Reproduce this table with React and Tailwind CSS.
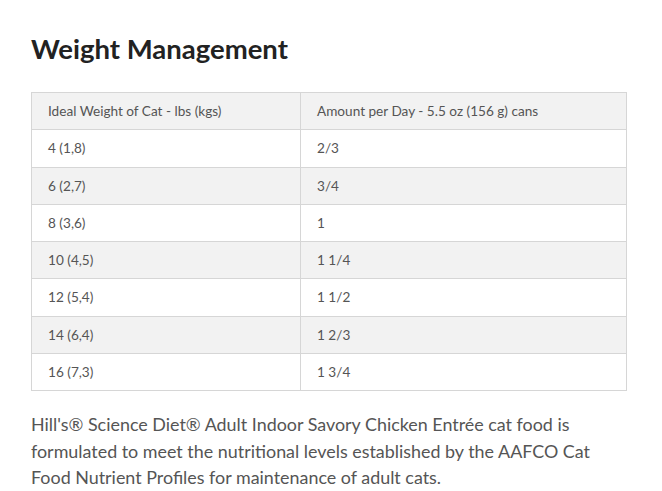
const rows = [
  ['4 (1,8)', '2/3'],
  ['6 (2,7)', '3/4'],
  ['8 (3,6)', '1'],
  ['10 (4,5)', '1 1/4'],
  ['12 (5,4)', '1 1/2'],
  ['14 (6,4)', '1 2/3'],
  ['16 (7,3)', '1 3/4'],
];

export default function App() {
  return (
    <div className="min-h-[491px] bg-white px-[31px] pt-[32px] font-['Lato',sans-serif]">
      <h2 className="text-[27.5px] font-bold leading-[33px] text-[#222]">Weight Management</h2>
      <table className="mt-[27px] w-[596px] border-collapse text-[13.6px] text-[#555]">
        <thead>
          <tr className="h-[37.3px] bg-[#f2f2f2]">
            <th className="w-[269px] border border-[#d6d6d6] pl-4 text-left font-normal">Ideal Weight of Cat - lbs (kgs)</th>
            <th className="border border-[#d6d6d6] pl-4 text-left font-normal">Amount per Day - 5.5 oz (156 g) cans</th>
          </tr>
        </thead>
        <tbody>
          {rows.map(([w, a], i) => (
            <tr key={w} className={`h-[37.3px] ${i % 2 === 1 ? 'bg-[#f2f2f2]' : 'bg-white'}`}>
              <td className="border border-[#d6d6d6] pl-4">{w}</td>
              <td className="border border-[#d6d6d6] pl-4">{a}</td>
            </tr>
          ))}
        </tbody>
      </table>
      <p className="mt-[20px] w-[592px] text-[17.9px] leading-[26.5px] text-[#555]">
        Hill's® Science Diet® Adult Indoor Savory Chicken Entrée cat food is formulated to meet the nutritional levels established by the AAFCO Cat Food Nutrient Profiles for maintenance of adult cats.
      </p>
    </div>
  );
}
